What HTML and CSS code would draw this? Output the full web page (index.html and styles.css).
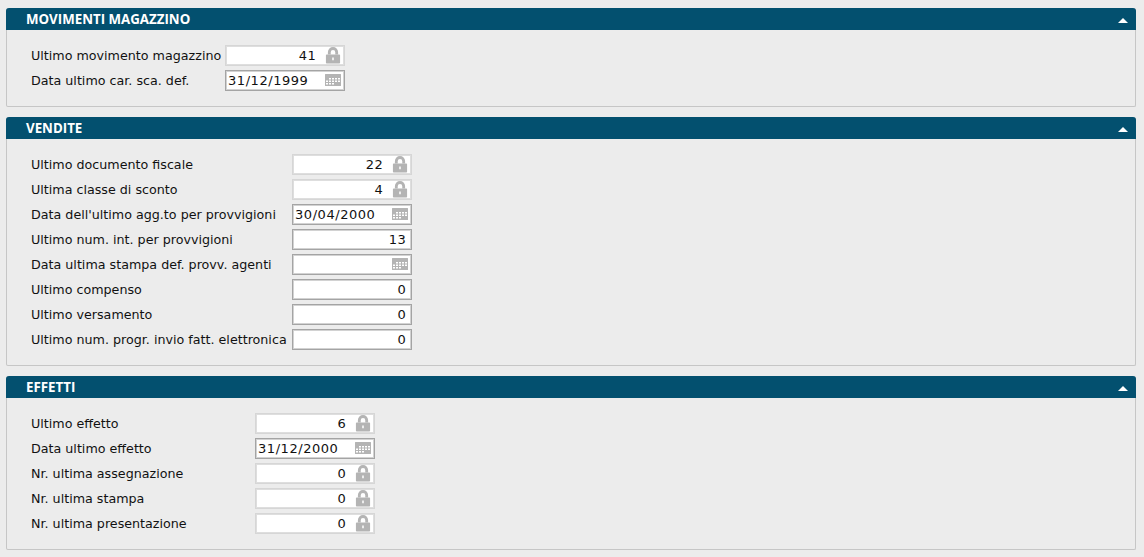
FILE: index.html
```html
<!DOCTYPE html>
<html lang="it">
<head>
    <meta charset="UTF-8">
    <meta name="viewport" content="width=device-width, initial-scale=1.0">
    <title>Movimenti magazzino</title>
    <link rel="stylesheet" href="styles.css">
</head>
<body>
    <svg class="defs" width="0" height="0">
        <symbol id="lock" viewBox="0 0 16 18">
            <path d="M2.600 8V5.500a5.400 5.400 0 0 1 10.800 0V8h-3V5.500a2.400 2.400 0 0 0-4.800 0V8z"/>
            <path fill-rule="evenodd" d="M1.300 8h13.400a.8.8 0 0 1 .8.8v7.900a.8.8 0 0 1-.8.8H1.300a.8.8 0 0 1-.8-.8V8.800a.8.8 0 0 1 .8-.8zM7.200 11v3h1.600v-3z"/>
        </symbol>
        <symbol id="cal" viewBox="0 0 16 12">
            <path fill-rule="evenodd" d="M.5 0h15a.5.5 0 0 1 .5.5v11a.5.5 0 0 1-.5.5H.5a.5.5 0 0 1-.5-.5V.5A.5.5 0 0 1 .5 0zM4 4v1.500h2V4zm3 0v1.500h2V4zm3 0v1.500h2V4zm3 0v1.500h2V4zM1 6.500V8h2V6.500zm3 0V8h2V6.500zm3 0V8h2V6.500zm3 0V8h2V6.500zm3 0V8h2V6.500zM1 9v1.500h2V9zm3 0v1.500h2V9zm3 0v1.500h2V9z"/>
        </symbol>
    </svg>

    <section class="panel">
        <header class="panel-head">
            <h2>MOVIMENTI MAGAZZINO</h2>
            <span class="arrow"></span>
        </header>
        <div class="panel-body labels-sm">
            <div class="row">
                <label>Ultimo movimento magazzino</label>
                <div class="field locked"><span class="val">41</span><svg class="ico ico-lock"><use href="#lock"/></svg></div>
            </div>
            <div class="row">
                <label>Data ultimo car. sca. def.</label>
                <div class="field date"><span class="val">31/12/1999</span><svg class="ico ico-cal"><use href="#cal"/></svg></div>
            </div>
        </div>
    </section>

    <section class="panel">
        <header class="panel-head">
            <h2>VENDITE</h2>
            <span class="arrow"></span>
        </header>
        <div class="panel-body labels-lg">
            <div class="row">
                <label>Ultimo documento fiscale</label>
                <div class="field locked"><span class="val">22</span><svg class="ico ico-lock"><use href="#lock"/></svg></div>
            </div>
            <div class="row">
                <label>Ultima classe di sconto</label>
                <div class="field locked"><span class="val">4</span><svg class="ico ico-lock"><use href="#lock"/></svg></div>
            </div>
            <div class="row">
                <label>Data dell'ultimo agg.to per provvigioni</label>
                <div class="field date"><span class="val">30/04/2000</span><svg class="ico ico-cal"><use href="#cal"/></svg></div>
            </div>
            <div class="row">
                <label>Ultimo num. int. per provvigioni</label>
                <div class="field"><span class="val">13</span></div>
            </div>
            <div class="row">
                <label>Data ultima stampa def. provv. agenti</label>
                <div class="field date"><span class="val"></span><svg class="ico ico-cal"><use href="#cal"/></svg></div>
            </div>
            <div class="row">
                <label>Ultimo compenso</label>
                <div class="field"><span class="val">0</span></div>
            </div>
            <div class="row">
                <label>Ultimo versamento</label>
                <div class="field"><span class="val">0</span></div>
            </div>
            <div class="row">
                <label>Ultimo num. progr. invio fatt. elettronica</label>
                <div class="field"><span class="val">0</span></div>
            </div>
        </div>
    </section>

    <section class="panel">
        <header class="panel-head">
            <h2>EFFETTI</h2>
            <span class="arrow"></span>
        </header>
        <div class="panel-body labels-md">
            <div class="row">
                <label>Ultimo effetto</label>
                <div class="field locked"><span class="val">6</span><svg class="ico ico-lock"><use href="#lock"/></svg></div>
            </div>
            <div class="row">
                <label>Data ultimo effetto</label>
                <div class="field date"><span class="val">31/12/2000</span><svg class="ico ico-cal"><use href="#cal"/></svg></div>
            </div>
            <div class="row">
                <label>Nr. ultima assegnazione</label>
                <div class="field locked"><span class="val">0</span><svg class="ico ico-lock"><use href="#lock"/></svg></div>
            </div>
            <div class="row">
                <label>Nr. ultima stampa</label>
                <div class="field locked"><span class="val">0</span><svg class="ico ico-lock"><use href="#lock"/></svg></div>
            </div>
            <div class="row">
                <label>Nr. ultima presentazione</label>
                <div class="field locked"><span class="val">0</span><svg class="ico ico-lock"><use href="#lock"/></svg></div>
            </div>
        </div>
    </section>
</body>
</html>
```

FILE: styles.css
```css
html {
    overflow: hidden;
}

body {
    margin: 0;
    padding: 8px 8px 0 6px;
    background: #ececec;
    font-family: "DejaVu Sans", sans-serif;
    font-size: 12.7px;
    color: #111;
    display: flex;
    flex-direction: column;
    gap: 10px;
}

.defs {
    position: absolute;
}

.panel {
    border: 1px solid #c6c6c6;
    border-top: none;
    border-radius: 3px 3px 2px 2px;
}

.panel-head {
    height: 22px;
    margin: 0 -1px;
    background: #03506f;
    border-radius: 3px 3px 0 0;
    display: flex;
    align-items: center;
    justify-content: space-between;
    padding: 0 8px 0 20px;
}

.panel-head h2 {
    margin: 0;
    font-family: "Open Sans", sans-serif;
    font-size: 13.3px;
    font-weight: 700;
    color: #fff;
}

.arrow {
    width: 0;
    height: 0;
    margin-top: 2px;
    border-left: 5px solid transparent;
    border-right: 5px solid transparent;
    border-bottom: 5px solid #fff;
}

.panel-body {
    padding: 15px 0 16px 24px;
    display: flex;
    flex-direction: column;
    gap: 5px;
}

.row {
    display: flex;
    align-items: center;
    height: 20px;
}

.row label {
    flex: none;
    padding-top: 1px;
}

.labels-sm label {
    width: 194px;
}

.labels-lg label {
    width: 261px;
}

.labels-md label {
    width: 224px;
}

.field {
    width: 120px;
    height: 21px;
    box-sizing: border-box;
    border: 1px solid #a4a4a4;
    box-shadow: inset 0 0 0 1px #d2d2d2;
    background: #fff;
    display: flex;
    align-items: center;
    padding: 0 5px 0 0;
    font-size: 13px;
    letter-spacing: 0.3px;
}

.field.locked {
    border-color: #d6d6d6;
    box-shadow: inset 0 0 0 1px #dedede;
}

.field.date,
.field.locked {
    padding-right: 2px;
}

.val {
    flex: 1;
    text-align: right;
}

.date .val {
    padding-left: 2px;
    letter-spacing: 0.55px;
    text-align: left;
}

.locked .val {
    padding-right: 9px;
}

.ico {
    flex: none;
    fill: #b4b4b4;
}

.ico-lock {
    width: 16px;
    height: 17px;
    margin-right: 1px;
}

.ico-cal {
    width: 16px;
    height: 12px;
    margin-right: 1px;
}
```
